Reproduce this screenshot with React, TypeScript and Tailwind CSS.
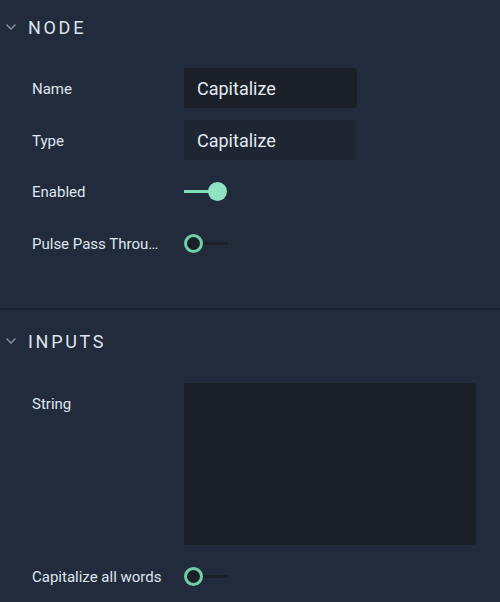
import React from 'react'

function Chevron() {
  return (
    <svg width="12" height="8" viewBox="0 0 12 8" className="shrink-0">
      <path d="M1.5 1.5 L6 6 L10.5 1.5" fill="none" stroke="#8b94a3" strokeWidth="1.4" />
    </svg>
  )
}

function SectionHeader({ title }: { title: string }) {
  return (
    <div className="flex items-center h-[52px] pl-[5px] gap-[11px] pt-[2px]">
      <Chevron />
      <span className="text-[18px] tracking-[0.15em] text-[#dde4ee]">{title}</span>
    </div>
  )
}

function Label({ text }: { text: string }) {
  return (
    <div className="w-[184px] pl-[32px] pr-[22px] pt-[2px] shrink-0 truncate text-[15px] text-[#dfe6ef]">{text}</div>
  )
}

function Toggle({ on }: { on: boolean }) {
  if (on) {
    return (
      <div className="flex items-center w-[44px]">
        <div className="h-[3px] w-[26px] bg-[#7fdcba]" />
        <div className="w-[19px] h-[19px] rounded-full bg-[#8fe3c2] -ml-[2px]" />
      </div>
    )
  }
  return (
    <div className="flex items-center w-[44px]">
      <div className="w-[19px] h-[19px] rounded-full border-[3px] border-[#6fcfa8] bg-[#1a1f28] shrink-0" />
      <div className="h-[3px] w-[25px] bg-[#1a1f28]" />
    </div>
  )
}

export default function App() {
  return (
    <div className="w-[500px] h-[602px] bg-[#222b3b] overflow-hidden" style={{ fontFamily: 'Roboto, "Noto Sans", sans-serif' }}>
      <SectionHeader title="NODE" />
      <div className="flex flex-col gap-[12px] pt-[16px] pb-[45px]">
        <div className="flex items-center h-[40px]">
          <Label text="Name" />
          <div className="w-[173px] h-[40px] bg-[#1a1f28] flex items-center pl-[13px] text-[18px] text-[#e3e9f1]">Capitalize</div>
        </div>
        <div className="flex items-center h-[40px]">
          <Label text="Type" />
          <div className="w-[173px] h-[40px] bg-[#1e2533] flex items-center pl-[13px] text-[18px] text-[#e3e9f1]">Capitalize</div>
        </div>
        <div className="flex items-center h-[39px]">
          <Label text="Enabled" />
          <Toggle on />
        </div>
        <div className="flex items-center h-[40px]">
          <Label text="Pulse Pass Through" />
          <Toggle on={false} />
        </div>
      </div>
      <div className="h-[2px] bg-[#1b212c]" />
      <div className="pt-[4px]">
        <SectionHeader title="INPUTS" />
      </div>
      <div className="flex flex-col gap-[11px] pt-[17px]">
        <div className="flex items-start">
          <div className="h-[40px] flex items-center">
            <Label text="String" />
          </div>
          <div className="w-[292px] h-[162px] bg-[#1a1f28] rounded-[2px]" />
        </div>
        <div className="flex items-center h-[40px]">
          <Label text="Capitalize all words" />
          <Toggle on={false} />
        </div>
      </div>
    </div>
  )
}
